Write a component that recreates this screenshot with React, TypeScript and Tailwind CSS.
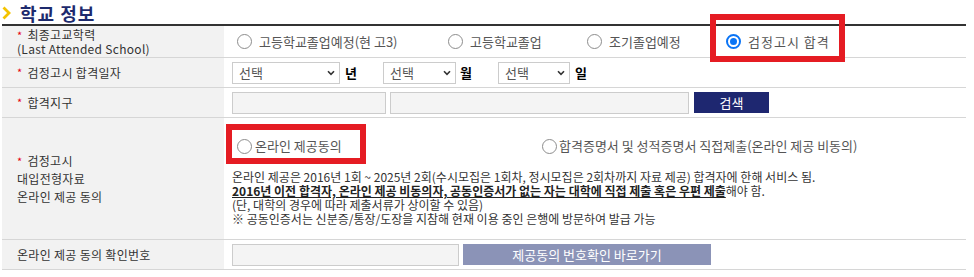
import React from "react";

function Radio({ checked = false }: { checked?: boolean }) {
  if (checked) {
    return (
      <span className="inline-flex w-[15px] h-[15px] shrink-0 items-center justify-center rounded-full border-2 border-[#0a74f5] bg-white">
        <span className="block w-[7px] h-[7px] rounded-full bg-[#0a74f5]" />
      </span>
    );
  }
  return <span className="inline-block w-[15px] h-[15px] shrink-0 rounded-full border border-[#8d8d8d] bg-white" />;
}

function Select({ w }: { w: string }) {
  return (
    <div className={`${w} h-[22px] border border-[#cccccc] bg-white flex items-center justify-between pl-[6px] pr-[4px]`}>
      <span className="text-[13px] leading-[20px] font-normal text-[#555]">선택</span>
      <svg width="8" height="6" viewBox="0 0 8 6">
        <path d="M1 1.2 L4 4.3 L7 1.2" fill="none" stroke="#333" strokeWidth="1.6" />
      </svg>
    </div>
  );
}

function Star() {
  return <span className="text-[#e60012] text-[11px] mr-[5px]">*</span>;
}

export default function App() {
  return (
    <div className="relative w-[974px] h-[277px] bg-white pl-[2px] font-['Noto_Sans_CJK_KR','Noto_Sans',sans-serif] text-[#333] overflow-hidden">
      {/* title */}
      <div className="flex items-center h-[24px]">
        <svg width="9" height="14" viewBox="0 0 9 14" className="mt-[1px]">
          <path d="M1.5 1.5 L7 7 L1.5 12.5" fill="none" stroke="#f4c300" strokeWidth="2.8" />
        </svg>
        <span className="ml-[9px] mt-[2px] text-[18px] leading-[22px] font-bold text-[#1d2a6d] tracking-[1px]">학교 정보</span>
      </div>

      <div className="w-[964px] border-t-2 border-[#333]">
        {/* row 1 */}
        <div className="flex h-[32px] border-b border-[#d6d6d6]">
          <div className="w-[222px] bg-[#f2f2f2] pl-[15px] flex flex-col justify-center text-[12px] leading-[14px] tracking-[0.3px]">
            <div><Star />최종고교학력</div>
            <div>(Last Attended School)</div>
          </div>
          <div className="flex-1 pl-[13px] flex items-center text-[13px] text-[#555]">
            <div className="w-[211px] flex items-center"><Radio /><span className="ml-[7px]">고등학교졸업예정(현 고3)</span></div>
            <div className="w-[139px] flex items-center"><Radio /><span className="ml-[7px]">고등학교졸업</span></div>
            <div className="w-[139px] flex items-center"><Radio /><span className="ml-[7px]">조기졸업예정</span></div>
            <div className="flex items-center"><Radio checked /><span className="ml-[7px] tracking-[1px]">검정고시 합격</span></div>
          </div>
        </div>

        {/* row 2 */}
        <div className="flex h-[30px] border-b border-[#d6d6d6]">
          <div className="w-[222px] bg-[#f2f2f2] pl-[15px] flex items-center text-[12px] tracking-[0.3px]">
            <Star />검정고시 합격일자
          </div>
          <div className="flex-1 pl-[8px] flex items-center text-[13px]">
            <Select w="w-[108px]" />
            <span className="ml-[5px] w-[38px] font-bold text-black">년</span>
            <Select w="w-[73px]" />
            <span className="ml-[4px] w-[38px] font-bold text-black">월</span>
            <Select w="w-[72px]" />
            <span className="ml-[5px] font-bold text-black">일</span>
          </div>
        </div>

        {/* row 3 */}
        <div className="flex h-[30px] border-b border-[#d6d6d6]">
          <div className="w-[222px] bg-[#f2f2f2] pl-[15px] flex items-center text-[12px] tracking-[0.3px]">
            <Star />합격지구
          </div>
          <div className="flex-1 pl-[8px] flex items-center">
            <div className="w-[154px] h-[22px] border border-[#cccccc] bg-[#f4f4f4]" />
            <div className="ml-[4px] w-[299px] h-[22px] border border-[#cccccc] bg-[#f4f4f4]" />
            <div className="ml-[5px] w-[75px] h-[21px] bg-[#1e2770] text-white text-[13px] leading-[21px] text-center">검색</div>
          </div>
        </div>

        {/* row 4 */}
        <div className="flex h-[122px] border-b border-[#d6d6d6]">
          <div className="w-[222px] bg-[#f2f2f2] pl-[15px] flex flex-col justify-center text-[12px] leading-[18px] tracking-[0.3px]">
            <div><Star />검정고시</div>
            <div>대입전형자료</div>
            <div>온라인 제공 동의</div>
          </div>
          <div className="flex-1 pl-[8px] pt-[18px]">
            <div className="flex items-center h-[20px] pl-[5px] text-[13px] text-[#555]">
              <div className="w-[305px] flex items-center"><Radio /><span className="ml-[3px]">온라인 제공동의</span></div>
              <div className="flex items-center"><Radio /><span className="ml-[2px]">합격증명서 및 성적증명서 직접제출(온라인 제공 비동의)</span></div>
            </div>
            <div className="mt-[14px] text-[12px] leading-[14px] text-[#333]">
              <div className="h-[14px]">온라인 제공은 2016년 1회 ~ 2025년 2회(수시모집은 1회차, 정시모집은 2회차까지 자료 제공) 합격자에 한해 서비스 됨.</div>
              <div className="h-[14px]">
                <span className="font-bold underline text-[#222]">2016년 이전 합격자, 온라인 제공 비동의자, 공동인증서가 없는 자는 대학에 직접 제출 혹은 우편 제출</span>해야 함.
              </div>
              <div className="h-[14px]">(단, 대학의 경우에 따라 제출서류가 상이할 수 있음)</div>
              <div className="h-[14px]">※ 공동인증서는 신분증/통장/도장을 지참해 현재 이용 중인 은행에 방문하여 발급 가능</div>
            </div>
          </div>
        </div>

        {/* row 5 */}
        <div className="flex h-[30px] border-b border-[#d6d6d6]">
          <div className="w-[222px] bg-[#f2f2f2] pl-[15px] flex items-center text-[12px] tracking-[0.3px]">
            온라인 제공 동의 확인번호
          </div>
          <div className="flex-1 pl-[8px] flex items-center">
            <div className="w-[227px] h-[22px] border border-[#cccccc] bg-[#f4f4f4]" />
            <div className="ml-[4px] w-[248px] h-[21px] bg-[#8b93b7] text-white text-[13px] leading-[21px] text-center">제공동의 번호확인 바로가기</div>
          </div>
        </div>
      </div>

      {/* annotation boxes */}
      <div className="absolute left-[710px] top-[14px] w-[135px] h-[48px] border-[6px] border-[#e51c23]" />
      <div className="absolute left-[226px] top-[124px] w-[140px] h-[40px] border-[6px] border-[#e51c23]" />
    </div>
  );
}
